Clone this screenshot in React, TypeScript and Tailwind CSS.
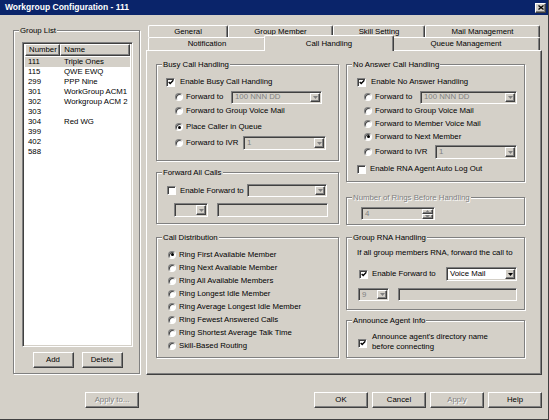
import React from 'react';

const raised =
  'border border-t-white border-l-white border-r-[#404040] border-b-[#404040] shadow-[inset_-1px_-1px_0_#808080]';
const sunken =
  'border border-t-[#808080] border-l-[#808080] border-r-white border-b-white shadow-[inset_1px_1px_0_#404040,inset_-1px_-1px_0_#d4d0c8]';

const groups = [
  { num: '111', name: 'Triple Ones' },
  { num: '115', name: 'QWE EWQ' },
  { num: '299', name: 'PPP Nine' },
  { num: '301', name: 'WorkGroup ACM1' },
  { num: '302', name: 'Workgroup ACM 2' },
  { num: '303', name: '' },
  { num: '304', name: 'Red WG' },
  { num: '399', name: '' },
  { num: '402', name: '' },
  { num: '588', name: '' },
];

const distribution = [
  'Ring First Available Member',
  'Ring Next Available Member',
  'Ring All Available Members',
  'Ring Longest Idle Member',
  'Ring Average Longest Idle Member',
  'Ring Fewest Answered Calls',
  'Ring Shortest Average Talk Time',
  'Skill-Based Routing',
];

const Check = ({ checked, className = '' }: { checked?: boolean; className?: string }) => (
  <span
    className={`w-[9px] h-[9px] shrink-0 bg-white flex items-center justify-center border border-t-[#808080] border-l-[#808080] border-r-white border-b-white shadow-[inset_1px_1px_0_#404040] ${className}`}
  >
    {checked && (
      <svg width="7" height="7" viewBox="0 0 7 7" className="mt-[1px] ml-[1px]">
        <polyline points="0.8,2.8 2.6,4.6 6.2,1" fill="none" stroke="#000" strokeWidth="1.6" />
      </svg>
    )}
  </span>
);

const Radio = ({ on }: { on?: boolean }) => (
  <span className="w-[8px] h-[8px] shrink-0 rounded-full bg-white flex items-center justify-center border border-t-[#808080] border-l-[#808080] border-r-white border-b-white shadow-[inset_1px_1px_0_#404040]">
    {on && <span className="w-[3px] h-[3px] rounded-full bg-black" />}
  </span>
);

const Arrow = ({ disabled, up }: { disabled?: boolean; up?: boolean }) => (
  <svg width="5" height="3" viewBox="0 0 5 3">
    <path d={up ? 'M0 3h5L2.5 0z' : 'M0 0h5L2.5 3z'} fill={disabled ? '#808080' : '#000'} />
  </svg>
);

const Combo = ({ value = '', disabled, className = '' }: { value?: string; disabled?: boolean; className?: string }) => (
  <div className={`flex p-[1px] ${sunken} ${disabled ? 'bg-[#d4d0c8] text-[#808080]' : 'bg-white'} ${className}`}>
    <span className="flex-1 flex items-center pl-[2px] whitespace-nowrap overflow-hidden">{value}</span>
    <span className={`w-[10px] bg-[#d4d0c8] flex items-center justify-center ${raised}`}>
      <Arrow disabled={disabled} />
    </span>
  </div>
);

const Field = ({ className = '' }: { className?: string }) => (
  <div className={`bg-[#d4d0c8] ${sunken} ${className}`} />
);

const GroupBox = ({
  label,
  disabled,
  className = '',
  children,
}: {
  label: string;
  disabled?: boolean;
  className?: string;
  children?: React.ReactNode;
}) => (
  <div className={`relative border border-[#808080] shadow-[inset_1px_1px_0_#fff,1px_1px_0_#fff] ${className}`}>
    <span
      className={`absolute -top-[5px] left-[5px] px-[1px] bg-[#d4d0c8] leading-[9px] whitespace-nowrap ${
        disabled ? 'text-[#808080] [text-shadow:1px_1px_0_#fff]' : ''
      }`}
    >
      {label}
    </span>
    {children}
  </div>
);

const Button = ({ label, disabled, className = '' }: { label: string; disabled?: boolean; className?: string }) => (
  <div
    className={`h-[16px] flex items-center justify-center bg-[#d4d0c8] ${raised} ${
      disabled ? 'text-[#808080] [text-shadow:1px_1px_0_#fff]' : ''
    } ${className}`}
  >
    {label}
  </div>
);

const Tab = ({ label, width }: { label: string; width: string }) => (
  <div
    className={`${width} h-full flex items-center justify-center rounded-t-[2px] border-t border-l border-r border-t-white border-l-white border-r-[#404040] shadow-[inset_-1px_0_0_#808080]`}
  >
    {label}
  </div>
);

export default function App() {
  return (
    <div className="w-[549px] h-[420px] bg-[#d4d0c8] flex flex-col overflow-hidden border-r border-b border-[#404040] font-['Liberation_Sans',Arial,sans-serif] text-[7.8px] leading-none text-black">
      {/* title bar */}
      <div className="h-[15px] bg-[#0a246a] flex items-center justify-between pl-[5px] pr-[2px]">
        <span className="text-white font-bold text-[8.5px]">Workgroup Configuration - 111</span>
        <span className={`w-[11px] h-[10px] bg-[#d4d0c8] flex items-center justify-center ${raised}`}>
          <svg width="6" height="5" viewBox="0 0 6 5">
            <path d="M0.5 0.5l5 4M5.5 0.5l-5 4" stroke="#000" strokeWidth="1.3" />
          </svg>
        </span>
      </div>

      <div className="h-[350px] mt-[10px] ml-[13px] flex">
        {/* group list */}
        <GroupBox label="Group List" className="w-[127px] h-[344px] mt-[5px] pt-[11px] pl-[8px]">
          <div className={`w-[111px] h-[305px] bg-white p-[2px] pt-[1px] ${sunken}`}>
            <div className="h-[12px] flex">
              <div className={`w-[36px] flex items-center pl-[3px] bg-[#d4d0c8] ${raised}`}>Number</div>
              <div className={`w-[71px] flex items-center pl-[3px] bg-[#d4d0c8] ${raised}`}>Name</div>
            </div>
            <div className="mt-[1px]">
              {groups.map((g, i) => (
                <div key={g.num} className={`h-[10px] flex items-center ${i === 0 ? 'bg-[#d4d0c8]' : ''}`}>
                  <span className="w-[36px] pl-[3px]">{g.num}</span>
                  <span className="pl-[3px]">{g.name}</span>
                </div>
              ))}
            </div>
          </div>
          <div className="w-[111px] mt-[5px] flex justify-center gap-[8px]">
            <Button label="Add" className="w-[41px]" />
            <Button label="Delete" className="w-[41px]" />
          </div>
        </GroupBox>

        {/* tabs */}
        <div className="ml-[6px] w-[396px] flex flex-col">
          <div className="h-[12px] flex pl-[2px]">
            <Tab label="General" width="w-[80px]" />
            <Tab label="Group Member" width="w-[105px]" />
            <Tab label="Skill Setting" width="w-[92px]" />
            <Tab label="Mail Management" width="w-[115px]" />
          </div>
          <div className="h-[13px] flex pl-[2px]">
            <Tab label="Notification" width="w-[118px]" />
            <div className="relative z-10 w-[130px] h-[16px] -mx-[2px] -mt-[2px] flex justify-center pt-[4px] bg-[#d4d0c8] rounded-t-[2px] border-t border-l border-r border-t-white border-l-white border-r-[#404040] shadow-[inset_-1px_0_0_#808080]">
              Call Handling
            </div>
            <Tab label="Queue Management" width="w-[148px]" />
          </div>

          <div className="h-[325px] flex gap-[7px] pl-[9px] pt-[13px] border border-t-white border-l-white border-r-[#404040] border-b-[#404040] shadow-[inset_-1px_-1px_0_#808080]">
            {/* left column */}
            <div className="w-[183px] flex flex-col">
              <GroupBox label="Busy Call Handling" className="h-[97px] pt-[11px]">
                <div className="h-[12px] flex items-center gap-[5px] ml-[9px]">
                  <Check checked />
                  <span>Enable Busy Call Handling</span>
                </div>
                <div className="h-[14px] mt-[2px] flex items-center ml-[18px]">
                  <Radio />
                  <span className="w-[45px] ml-[3px]">Forward to</span>
                  <Combo value="100 NNN DD" disabled className="w-[91px] h-[13px]" />
                </div>
                <div className="h-[13px] flex items-center ml-[18px] gap-[3px]">
                  <Radio />
                  <span>Forward to Group Voice Mail</span>
                </div>
                <div className="h-[14px] mt-[3px] flex items-center ml-[18px] gap-[3px]">
                  <Radio on />
                  <span>Place Caller in Queue</span>
                </div>
                <div className="h-[14px] mt-[2px] flex items-center ml-[18px]">
                  <Radio />
                  <span className="w-[57px] ml-[3px]">Forward to IVR</span>
                  <Combo value="1" disabled className="w-[83px] h-[14px]" />
                </div>
              </GroupBox>

              <GroupBox label="Forward All Calls" className="h-[52px] mt-[11px] pt-[11px]">
                <div className="h-[13px] flex items-center ml-[10px]">
                  <Check />
                  <span className="w-[67px] ml-[4px]">Enable Forward to</span>
                  <Combo disabled className="w-[80px] h-[13px]" />
                </div>
                <div className="h-[14px] mt-[6px] flex ml-[17px] gap-[9px]">
                  <Combo disabled className="w-[34px] h-[14px]" />
                  <Field className="w-[111px] h-[14px]" />
                </div>
              </GroupBox>

              <GroupBox label="Call Distribution" className="h-[121px] mt-[13px] pt-[10px]">
                {distribution.map((d, i) => (
                  <div key={d} className="h-[13px] flex items-center gap-[3px] ml-[11px]">
                    <Radio on={i === 0} />
                    <span>{d}</span>
                  </div>
                ))}
              </GroupBox>
            </div>

            {/* right column */}
            <div className="w-[179px] flex flex-col">
              <GroupBox label="No Answer Call Handling" className="h-[118px] pt-[11px]">
                <div className="h-[12px] flex items-center gap-[5px] ml-[10px]">
                  <Check checked />
                  <span>Enable No Answer Handling</span>
                </div>
                <div className="h-[14px] mt-[2px] flex items-center ml-[17px]">
                  <Radio />
                  <span className="w-[45px] ml-[3px]">Forward to</span>
                  <Combo value="100 NNN DD" disabled className="w-[97px] h-[13px]" />
                </div>
                {['Forward to Group Voice Mail', 'Forward to Member Voice Mail', 'Forward to Next Member'].map(
                  (t, i) => (
                    <div key={t} className="h-[13px] flex items-center gap-[3px] ml-[17px]">
                      <Radio on={i === 2} />
                      <span>{t}</span>
                    </div>
                  ),
                )}
                <div className="h-[14px] mt-[2px] flex items-center ml-[17px]">
                  <Radio />
                  <span className="w-[60px] ml-[3px]">Forward to IVR</span>
                  <Combo value="1" disabled className="w-[82px] h-[14px]" />
                </div>
                <div className="h-[12px] mt-[4px] flex items-center gap-[4px] ml-[10px]">
                  <Check />
                  <span>Enable RNA Agent Auto Log Out</span>
                </div>
              </GroupBox>

              <GroupBox label="Number of Rings Before Handling" disabled className="h-[28px] mt-[15px] pt-[9px] pl-[14px]">
                <div className={`w-[74px] h-[13px] flex p-[1px] text-[#808080] ${sunken}`}>
                  <span className="flex-1 flex items-center pl-[2px]">4</span>
                  <div className="w-[11px] flex flex-col">
                    <span className={`flex-1 flex items-center justify-center ${raised}`}>
                      <Arrow disabled up />
                    </span>
                    <span className={`flex-1 flex items-center justify-center ${raised}`}>
                      <Arrow disabled />
                    </span>
                  </div>
                </div>
              </GroupBox>

              <GroupBox label="Group RNA Handling" className="h-[73px] mt-[12px] pt-[10px]">
                <div className="h-[10px] flex items-center ml-[10px]">If all group members RNA, forward the call to</div>
                <div className="h-[14px] mt-[9px] flex items-center ml-[12px]">
                  <Check checked />
                  <span className="w-[74px] ml-[4px]">Enable Forward to</span>
                  <Combo value="Voice Mail" className="w-[71px] h-[14px]" />
                </div>
                <div className="h-[13px] mt-[7px] flex ml-[11px] gap-[9px]">
                  <Combo value="9" disabled className="w-[31px] h-[13px]" />
                  <Field className="w-[119px] h-[13px]" />
                </div>
              </GroupBox>

              <GroupBox label="Announce Agent Info" className="h-[38px] mt-[10px] pt-[11px]">
                <div className="flex items-center ml-[11px] gap-[5px]">
                  <Check checked className="mt-[2px]" />
                  <span className="leading-[10px]">
                    Announce agent's directory name
                    <br />
                    before connecting
                  </span>
                </div>
              </GroupBox>
            </div>
          </div>
        </div>
      </div>

      {/* bottom buttons */}
      <div className="h-[16px] mt-[17px] flex">
        <Button label="Apply to..." disabled className="w-[54px] ml-[85px]" />
        <div className="ml-auto mr-[6px] flex gap-[4px]">
          <Button label="OK" className="w-[54px]" />
          <Button label="Cancel" className="w-[54px]" />
          <Button label="Apply" disabled className="w-[54px]" />
          <Button label="Help" className="w-[54px]" />
        </div>
      </div>
    </div>
  );
}
